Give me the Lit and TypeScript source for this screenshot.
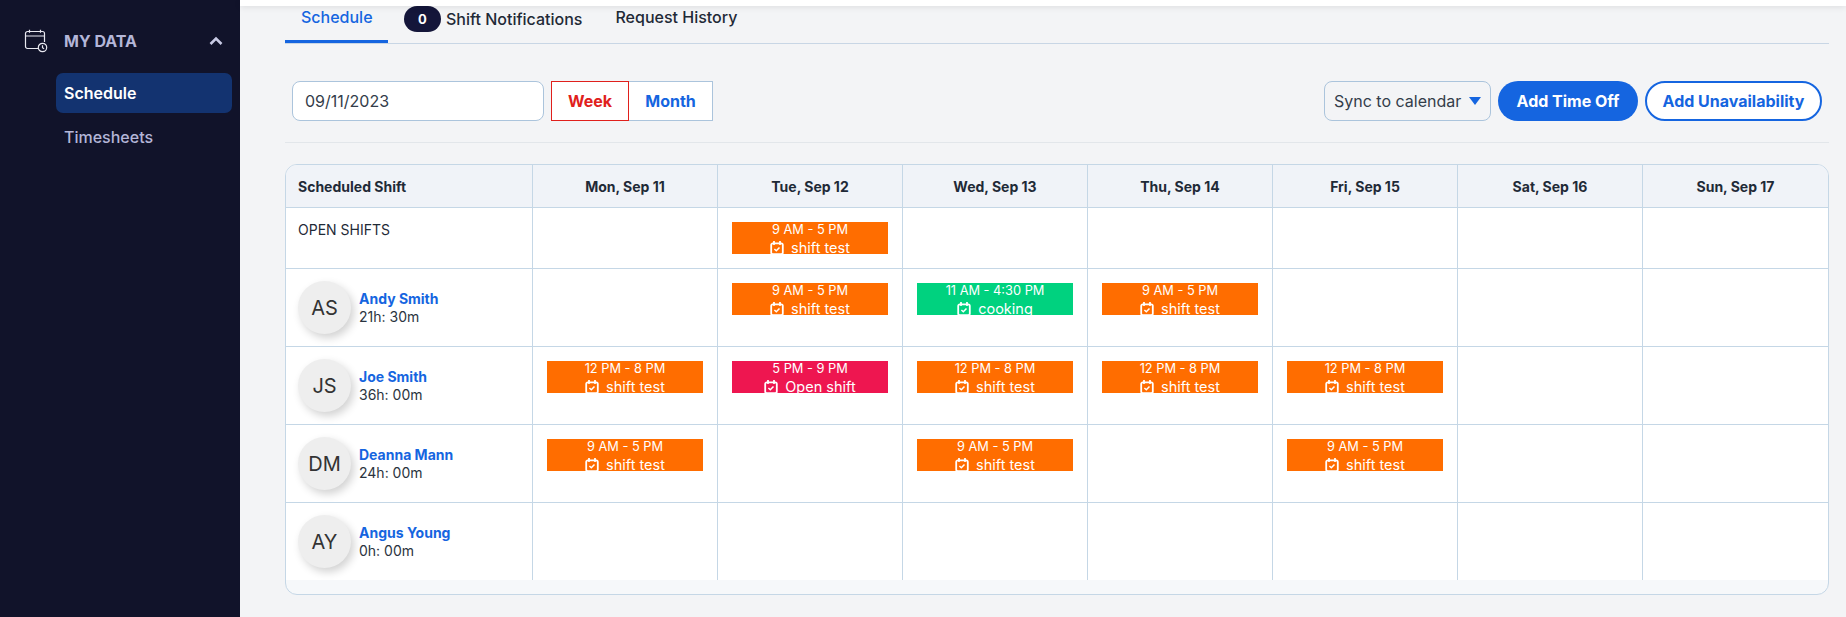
import { LitElement, html, css, svg } from "lit";
import { customElement } from "lit/decorators.js";

type Ev = { t: string; n: string; c: string };
const o = (t: string): Ev => ({ t, n: "shift test", c: "orange" });
const rows: { init?: string; name?: string; hrs?: string; cells: (Ev | null)[] }[] = [
  { cells: [null, o("9 AM - 5 PM"), null, null, null, null, null] },
  { init: "AS", name: "Andy Smith", hrs: "21h: 30m", cells: [null, o("9 AM - 5 PM"), { t: "11 AM - 4:30 PM", n: "cooking", c: "green" }, o("9 AM - 5 PM"), null, null, null] },
  { init: "JS", name: "Joe Smith", hrs: "36h: 00m", cells: [o("12 PM - 8 PM"), { t: "5 PM - 9 PM", n: "Open shift", c: "pink" }, o("12 PM - 8 PM"), o("12 PM - 8 PM"), o("12 PM - 8 PM"), null, null] },
  { init: "DM", name: "Deanna Mann", hrs: "24h: 00m", cells: [o("9 AM - 5 PM"), null, o("9 AM - 5 PM"), null, o("9 AM - 5 PM"), null, null] },
  { init: "AY", name: "Angus Young", hrs: "0h: 00m", cells: [null, null, null, null, null, null, null] },
];
const days = ["Mon, Sep 11", "Tue, Sep 12", "Wed, Sep 13", "Thu, Sep 14", "Fri, Sep 15", "Sat, Sep 16", "Sun, Sep 17"];

const check = svg`<svg class="ci" viewBox="0 0 14 14" fill="none" stroke="#fff" stroke-width="1.8"><rect x="1.2" y="2.4" width="11.6" height="10.8" rx="1.6"/><path d="M4 .6v2.6M10 .6v2.6" stroke-linecap="round"/><path d="M4.4 8l1.9 1.8 3.2-3.4" stroke-width="1.5"/></svg>`;

@customElement("app-root")
export class AppRoot extends LitElement {
  static styles = css`
    :host { display: flex; width: 1846px; height: 617px; overflow: hidden; font-family: Inter, "Liberation Sans", sans-serif; background: #f3f4f6; color: #1f2a37; }
    .side { width: 240px; flex: none; background: #11132a; padding: 29px 8px 0 24px; box-sizing: border-box; }
    .my { display: flex; align-items: center; height: 24px; }
    .my svg.cal { width: 24px; height: 24px; flex: none; }
    .my span { margin-left: 16px; font-size: 16px; font-weight: 700; color: #b4b6d8; flex: 1; }
    .my svg.chev { width: 14px; height: 10px; margin-right: 9px; }
    .sub { margin: 20px 0 0 32px; display: flex; flex-direction: column; }
    .sub div { height: 40px; display: flex; align-items: center; padding-left: 8px; font-size: 16px; font-weight: 500; color: #b4b6d8; border-radius: 7px; }
    .sub .on { background: #133370; color: #fff; font-weight: 600; margin-bottom: 4px; }
    .main { flex: 1; min-width: 0; position: relative; padding: 6px 17px 0 45px; }
    .topbar { position: absolute; left: 0; right: 0; top: 0; height: 6px; background: #fff; box-shadow: 0 1px 6px rgba(0,0,0,.1); }
    .tabs { display: flex; height: 37px; border-bottom: 1px solid #c8d6e5; width: 1544px; font-size: 16px; font-weight: 500; }
    .tab { padding: 0 17px; height: 34px; line-height: 22px; border-bottom: 3px solid transparent; color: #1f2a37; }
    .tab.on { padding: 0 16px; color: #1565e0; border-bottom-color: #1565e0; width: 71px; }
    .tab.n { display: flex; align-items: flex-start; gap: 5px; padding: 0 16px; line-height: 26px; }
    .badge { width: 37px; height: 26px; border-radius: 13px; background: #14163a; color: #fff; font-size: 13px; font-weight: 700; text-align: center; }
    .tools { display: flex; align-items: center; height: 99px; width: 1544px; box-sizing: border-box; padding: 16px 7px 1px; border-bottom: 1px solid #e2e6ea; }
    .date { width: 252px; height: 40px; box-sizing: border-box; border: 1px solid #abc4dc; border-radius: 8px; background: #fff; display: flex; align-items: center; padding-left: 12px; font-size: 16px; color: #333d4a; }
    .seg { display: flex; margin-left: 7px; }
    .seg div { height: 40px; box-sizing: border-box; display: flex; align-items: center; justify-content: center; font-size: 16px; font-weight: 700; background: #fff; }
    .wk { width: 78px; border: 1px solid #e0201c; color: #e0201c; }
    .mo { width: 84px; border: 1px solid #abc4dc; border-left: 0; color: #1565e0; }
    .spacer { flex: 1; }
    .sync { width: 167px; height: 40px; box-sizing: border-box; border: 1px solid #abc4dc; border-radius: 8px; display: flex; align-items: center; padding-left: 9px; font-size: 16px; color: #333d4a; gap: 8px; white-space: nowrap; }
    .sync svg { width: 12px; height: 8px; flex: none; }
    .btn { height: 40px; box-sizing: border-box; border-radius: 20px; display: flex; align-items: center; justify-content: center; font-size: 16px; font-weight: 700; margin-left: 7px; }
    .b1 { width: 140px; background: #1565e0; color: #fff; }
    .b2 { width: 177px; background: #fff; color: #1565e0; border: 2px solid #1565e0; }
    .table { margin-top: 21px; width: 1544px; height: 431px; box-sizing: border-box; border: 1px solid #c5d7e6; border-radius: 12px; overflow: hidden; background: #f6f8fa; }
    .grid { display: grid; grid-template-columns: 247px repeat(6, 185px) 185px; grid-template-rows: 43px 61px 78px 78px 78px 77px; }
    .c { box-sizing: border-box; background: #fff; border-right: 1px solid #c5d7e6; border-bottom: 1px solid #c5d7e6; position: relative; }
    .c.last { border-right: 0; }
    .c.end { border-bottom: 0; }
    .h { background: #f0f3f8; display: flex; align-items: center; justify-content: center; font-size: 14px; font-weight: 700; color: #1f2a37; }
    .h.f { justify-content: flex-start; padding-left: 12px; }
    .open { padding: 12px 12px 0; font-size: 14px; line-height: 20px; color: #1f2a37; }
    .p { display: flex; align-items: center; padding-left: 12px; gap: 8px; }
    .av { width: 53px; height: 53px; border-radius: 50%; background: #eee; box-shadow: 3px 4px 8px rgba(0,0,0,.18); font-size: 20px; display: flex; align-items: center; justify-content: center; color: #333; flex: none; }
    .nm { font-size: 14px; font-weight: 700; color: #1565e0; line-height: 18px; }
    .hr { font-size: 14px; color: #2b3440; line-height: 18px; }
    .cell { padding: 14px 14px 0 14px; }
    .ev { width: 156px; height: 32px; overflow: hidden; color: #fff; text-align: center; }
    .orange { background: #ff6d00; }
    .green { background: #00d27f; }
    .pink { background: #ee1650; }
    .tm { height: 14px; padding-top: 1px; font-size: 12.8px; line-height: 14px; }
    .nl { display: flex; align-items: center; justify-content: center; gap: 7px; margin-top: 2px; height: 18px; font-size: 14.5px; line-height: 18px; }
    .ci { width: 14px; height: 14px; flex: none; }
  `;

  render() {
    return html`
      <aside class="side">
        <div class="my">
          <svg class="cal" viewBox="0 0 24 24" fill="none" stroke="#e8e8f0" stroke-width="1.2"><path d="M18 19.5H3.5a2 2 0 0 1-2-2V4.5a2 2 0 0 1 2-2h15a2 2 0 0 1 2 2V13"/><path d="M1.5 7h19M5.5 .8v3M16.5 .8v3"/><circle cx="18.5" cy="18.5" r="4.2" fill="#11132a"/><path d="M18.5 16.2v2.5l1.6 1"/></svg>
          <span>MY DATA</span>
          <svg class="chev" viewBox="0 0 14 10" fill="none" stroke="#c8cae4" stroke-width="2.6"><path d="M1.5 8L7 2.5 12.5 8"/></svg>
        </div>
        <div class="sub"><div class="on">Schedule</div><div>Timesheets</div></div>
      </aside>
      <main class="main">
        <div class="topbar"></div>
        <nav class="tabs">
          <div class="tab on">Schedule</div>
          <div class="tab n"><span class="badge">0</span><span>Shift Notifications</span></div>
          <div class="tab">Request History</div>
        </nav>
        <section class="tools">
          <div class="date">09/11/2023</div>
          <div class="seg"><div class="wk">Week</div><div class="mo">Month</div></div>
          <div class="spacer"></div>
          <div class="sync">Sync to calendar <svg viewBox="0 0 12 8"><path d="M0 0h12L6 8z" fill="#1565e0"/></svg></div>
          <div class="btn b1">Add Time Off</div>
          <div class="btn b2">Add Unavailability</div>
        </section>
        <section class="table">
          <div class="grid">
            <div class="c h f">Scheduled Shift</div>
            ${days.map((d, i) => html`<div class="c h ${i === 6 ? "last" : ""}">${d}</div>`)}
            ${rows.map((r, ri) => html`
              ${r.init
                ? html`<div class="c p ${ri === 4 ? "end" : ""}"><div class="av">${r.init}</div><div><div class="nm">${r.name}</div><div class="hr">${r.hrs}</div></div></div>`
                : html`<div class="c open">OPEN SHIFTS</div>`}
              ${r.cells.map((e, i) => html`<div class="c cell ${i === 6 ? "last" : ""} ${ri === 4 ? "end" : ""}">
                ${e ? html`<div class="ev ${e.c}"><div class="tm">${e.t}</div><div class="nl">${check}<span>${e.n}</span></div></div>` : ""}
              </div>`)}
            `)}
          </div>
        </section>
      </main>
    `;
  }
}
